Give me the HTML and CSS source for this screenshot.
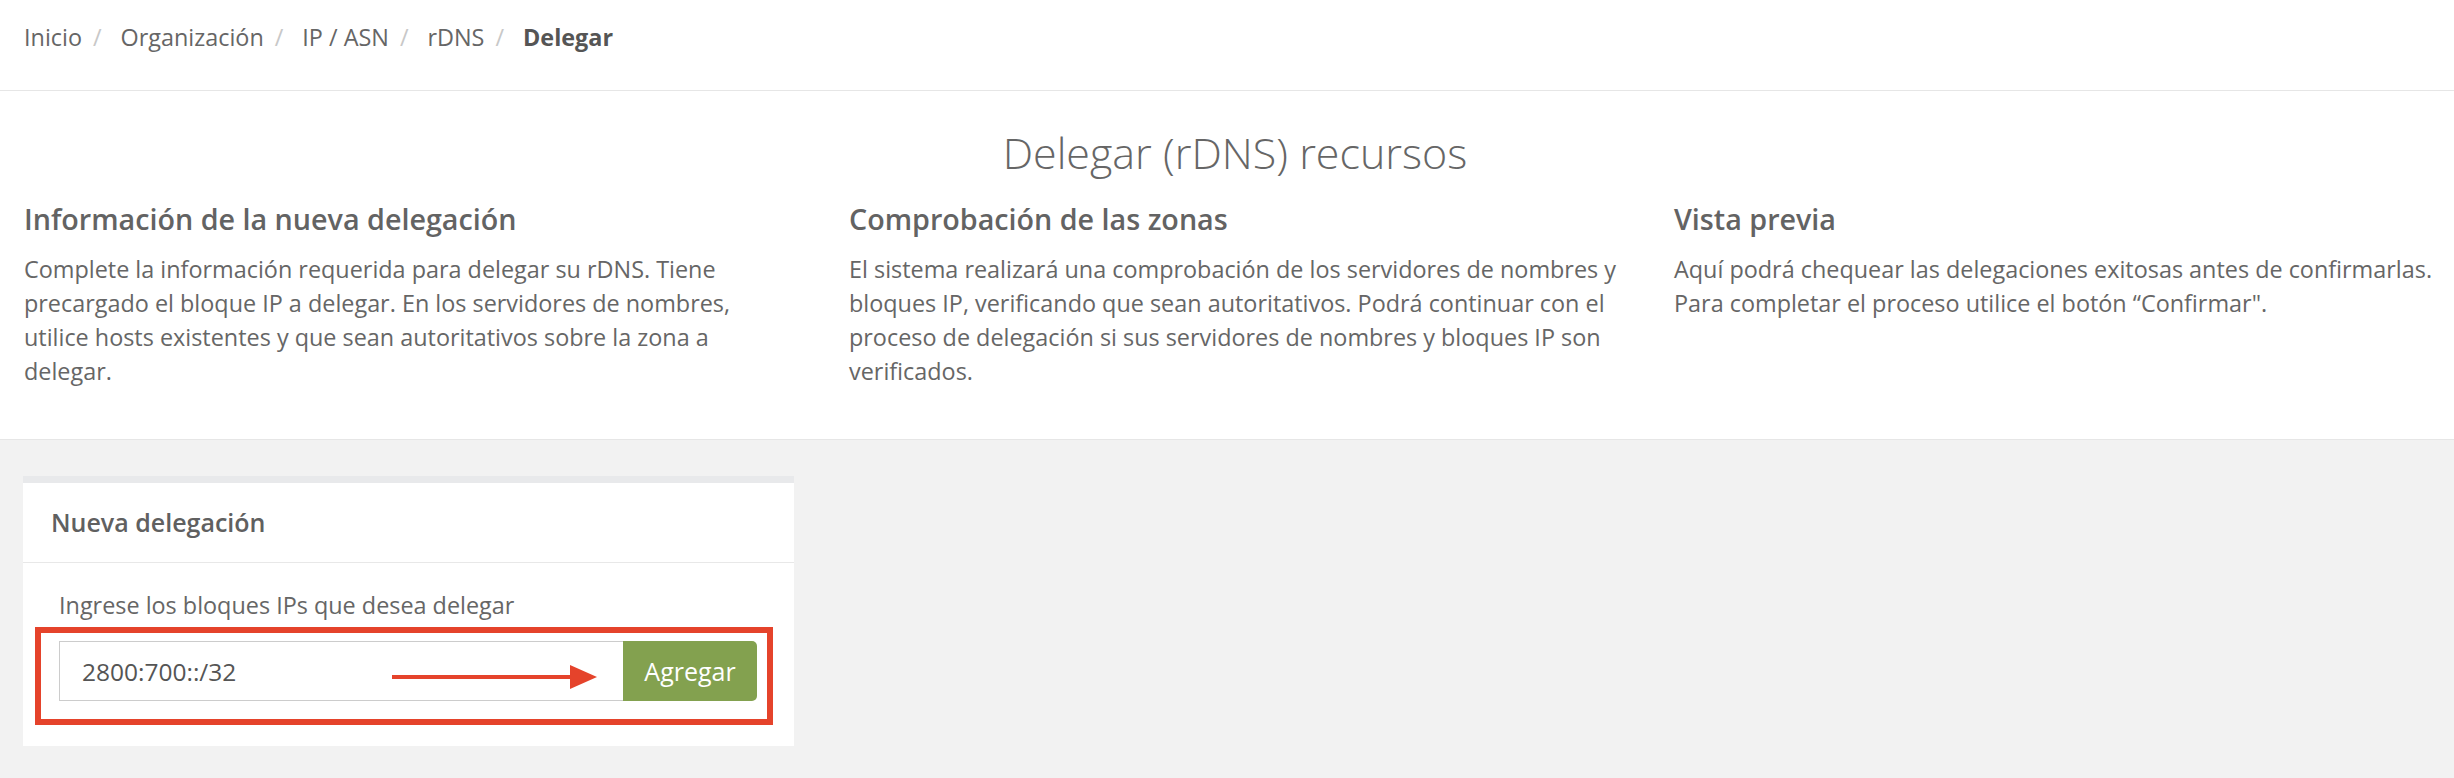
FILE: index.html
```html
<!DOCTYPE html>
<html lang="es">
<head>
<meta charset="utf-8">
<title>Delegar (rDNS) recursos</title>
<link rel="stylesheet" href="styles.css">
</head>
<body>
<nav class="breadcrumb">
  <a class="crumb" href="#">Inicio</a><span class="sep">/</span>
  <a class="crumb" href="#">Organización</a><span class="sep">/</span>
  <a class="crumb" href="#">IP / ASN</a><span class="sep">/</span>
  <a class="crumb" href="#">rDNS</a><span class="sep">/</span>
  <span class="crumb active">Delegar</span>
</nav>

<section class="intro">
  <h1 class="page-title">Delegar (rDNS) recursos</h1>
  <div class="steps">
    <div class="step">
      <h4 class="step-title">Información de la nueva delegación</h4>
      <p class="step-text">Complete la información requerida para delegar su rDNS. Tiene precargado el bloque IP a delegar. En los servidores de nombres, utilice hosts existentes y que sean autoritativos sobre la zona a delegar.</p>
    </div>
    <div class="step">
      <h4 class="step-title">Comprobación de las zonas</h4>
      <p class="step-text">El sistema realizará una comprobación de los servidores de nombres y bloques IP, verificando que sean autoritativos. Podrá continuar con el proceso de delegación si sus servidores de nombres y bloques IP son verificados.</p>
    </div>
    <div class="step">
      <h4 class="step-title">Vista previa</h4>
      <p class="step-text">Aquí podrá chequear las delegaciones exitosas antes de confirmarlas. Para completar el proceso utilice el botón “Confirmar".</p>
    </div>
  </div>
</section>

<main class="content">
  <div class="card">
    <div class="card-header">Nueva delegación</div>
    <div class="card-body">
      <label class="field-label" for="ipblock">Ingrese los bloques IPs que desea delegar</label>
      <div class="highlight">
        <div class="input-group">
          <input id="ipblock" class="form-input" type="text" value="2800:700::/32">
          <button class="btn-add" type="button">Agregar</button>
        </div>
        <svg class="arrow" width="206" height="24" viewBox="0 0 206 24" aria-hidden="true">
          <line x1="0" y1="12" x2="182" y2="12" stroke="#e5432b" stroke-width="4"/>
          <polygon points="178,0 205,12 178,24" fill="#e5432b"/>
        </svg>
      </div>
    </div>
  </div>
</main>
</body>
</html>
```
FILE: styles.css
```css
* { box-sizing: border-box; }

html, body {
  margin: 0;
  padding: 0;
}

body {
  font-family: "Open Sans", "Liberation Sans", sans-serif;
  font-size: 23.4px;
  line-height: 34px;
  color: #666;
  background: #f2f2f2;
  min-height: 778px;
}

/* Breadcrumb */
.breadcrumb {
  display: flex;
  align-items: center;
  height: 91px;
  padding: 0 24px 16px;
  background: #fff;
  border-bottom: 1px solid #e6e6e6;
}

.crumb {
  color: #666;
  text-decoration: none;
}

.crumb.active {
  color: #555;
  font-weight: 700;
}

.sep {
  color: #c8c8c8;
  margin: 0 19px 0 11px;
}

/* Intro section */
.intro {
  background: #fff;
  border-bottom: 1px solid #e6e6e6;
  padding: 32px 8px 51px 24px;
}

.page-title {
  margin: 0 0 17px;
  font-size: 43px;
  line-height: 60px;
  font-weight: 300;
  color: #666;
  text-align: center;
}

.steps {
  display: grid;
  grid-template-columns: repeat(3, 1fr);
  column-gap: 53px;
}

.step-title {
  margin: 0 0 14px;
  font-size: 28.7px;
  line-height: 38px;
  font-weight: 600;
  color: #636363;
}

.step-text {
  margin: 0;
}

/* Content */
.content {
  padding: 36px 23px 30px;
}

.card {
  width: 771px;
  background: #fff;
  border-top: 7px solid #e8e9eb;
}

.card-header {
  padding: 22px 28px 23px;
  font-size: 25px;
  font-weight: 600;
  color: #606060;
  border-bottom: 1px solid #e8e8e8;
}

.card-body {
  padding: 25px 21px 21px 12px;
}

.field-label {
  display: block;
  padding-left: 24px;
  margin-bottom: 5px;
}

.highlight {
  position: relative;
  border: 6px solid #e5432b;
  padding: 8px 10px 18px 18px;
}

.input-group {
  display: flex;
  height: 60px;
}

.form-input {
  flex: 1;
  min-width: 0;
  height: 60px;
  margin: 0;
  padding: 0 22px;
  border: 1px solid #ccc;
  border-right: none;
  border-radius: 0;
  font-family: inherit;
  font-size: 24.5px;
  color: #555;
  background: #fff;
  outline: none;
}

.btn-add {
  width: 134px;
  height: 60px;
  margin: 0;
  border: none;
  border-radius: 0 5px 5px 0;
  background: #83a14f;
  color: #fff;
  font-family: inherit;
  font-size: 25px;
}

.arrow {
  position: absolute;
  left: 351px;
  top: 32px;
}
```
